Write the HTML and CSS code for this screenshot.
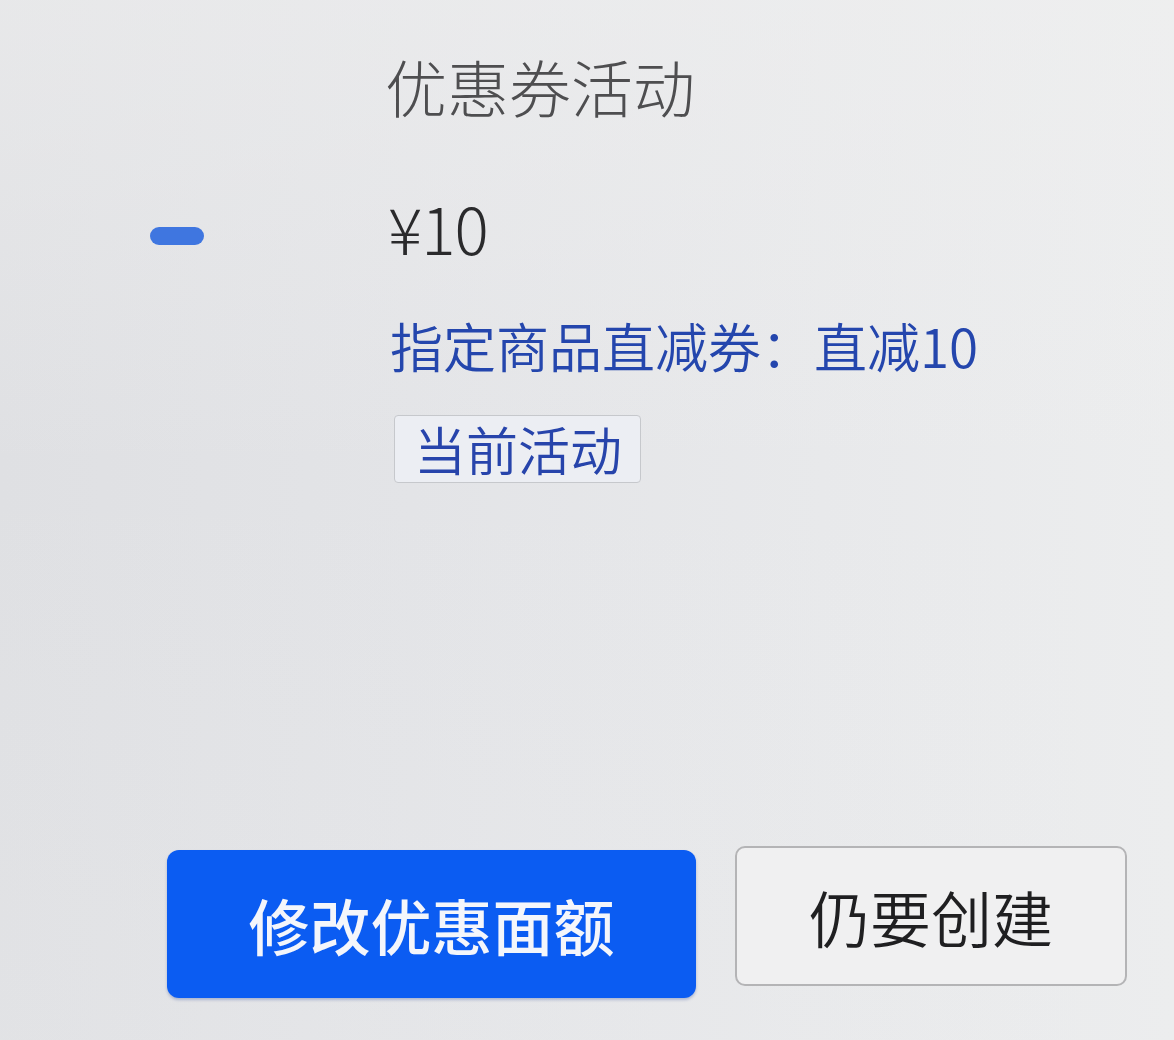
FILE: index.html
```html
<!DOCTYPE html>
<html lang="zh-CN">
<head>
<meta charset="utf-8">
<title>优惠券活动</title>
<link rel="stylesheet" href="styles.css">
</head>
<body>
<main class="sheet">
  <section class="coupon">
    <h1 class="title">优惠券活动</h1>
    <span class="dash"></span>
    <div class="price">¥10</div>
    <div class="desc">指定商品直减券：直减10</div>
    <div class="tag-wrap"><span class="tag">当前活动</span></div>
  </section>
  <div class="actions">
    <button class="btn btn-primary">修改优惠面额</button>
    <button class="btn btn-secondary">仍要创建</button>
  </div>
</main>
</body>
</html>
```

FILE: styles.css
```css
html, body {
  margin: 0;
  padding: 0;
}

body {
  width: 1174px;
  height: 1040px;
  overflow: hidden;
  font-family: "Noto Sans CJK SC", "Noto Sans", sans-serif;
  background:
    linear-gradient(180deg, rgba(240,240,240,0.5) 0%, rgba(240,240,240,0) 45%, rgba(236,237,238,0.2) 100%),
    linear-gradient(90deg, #dfe0e3 0%, #e3e4e7 35%, #e8e9eb 70%, #ecedee 100%);
}

.sheet {
  display: flex;
  flex-direction: column;
  height: 1040px;
}

.coupon {
  display: grid;
  grid-template-columns: 238px 1fr;
  padding-left: 150px;
  padding-top: 55px;
}

.title {
  grid-column: 2;
  grid-row: 1;
  margin: 0 0 0 -3px;
  font-size: 62px;
  line-height: 62px;
  font-weight: 300;
  color: #4e4e50;
}

.dash {
  grid-column: 1;
  grid-row: 2;
  align-self: start;
  justify-self: start;
  width: 54px;
  height: 18px;
  margin-top: 110px;
  border-radius: 9px;
  background: #3f76e0;
}

.price {
  grid-column: 2;
  grid-row: 2;
  margin-top: 78px;
  font-size: 64px;
  line-height: 64px;
  font-weight: 300;
  color: #2a2a2c;
  letter-spacing: -1px;
}

.desc {
  grid-column: 2;
  grid-row: 3;
  margin-top: 60px;
  margin-left: 2px;
  font-size: 53px;
  line-height: 53px;
  font-weight: 350;
  color: #2446ad;
  white-space: nowrap;
}

.tag-wrap {
  grid-column: 2;
  grid-row: 4;
  margin-top: 43px;
  padding-left: 6px;
}

.tag {
  display: inline-block;
  padding: 7px 18px 7px 19px;
  font-size: 52px;
  line-height: 52px;
  font-weight: 350;
  color: #2744ab;
  background: #eceef3;
  border: 1.5px solid #c6c8cc;
  border-radius: 4px;
}

.actions {
  display: flex;
  align-items: flex-start;
  gap: 39px;
  padding-left: 167px;
  margin-top: auto;
  margin-bottom: 42px;
}

.btn {
  font-family: "Noto Sans CJK SC", "Noto Sans", sans-serif;
  font-size: 61px;
  line-height: 1;
  cursor: pointer;
  display: flex;
  align-items: center;
  justify-content: center;
  padding: 0;
}

.btn-primary {
  width: 529px;
  height: 148px;
  margin-top: 4px;
  background: #0b5cf2;
  color: #f4f6fb;
  font-weight: 500;
  border: none;
  border-radius: 12px;
  box-shadow: 0 2px 3px rgba(0, 40, 140, 0.25);
}

.btn-secondary {
  width: 392px;
  height: 140px;
  background: #f0f0f1;
  color: #1f1f21;
  font-weight: 350;
  border: 2px solid #b4b4b6;
  border-radius: 10px;
}
```
